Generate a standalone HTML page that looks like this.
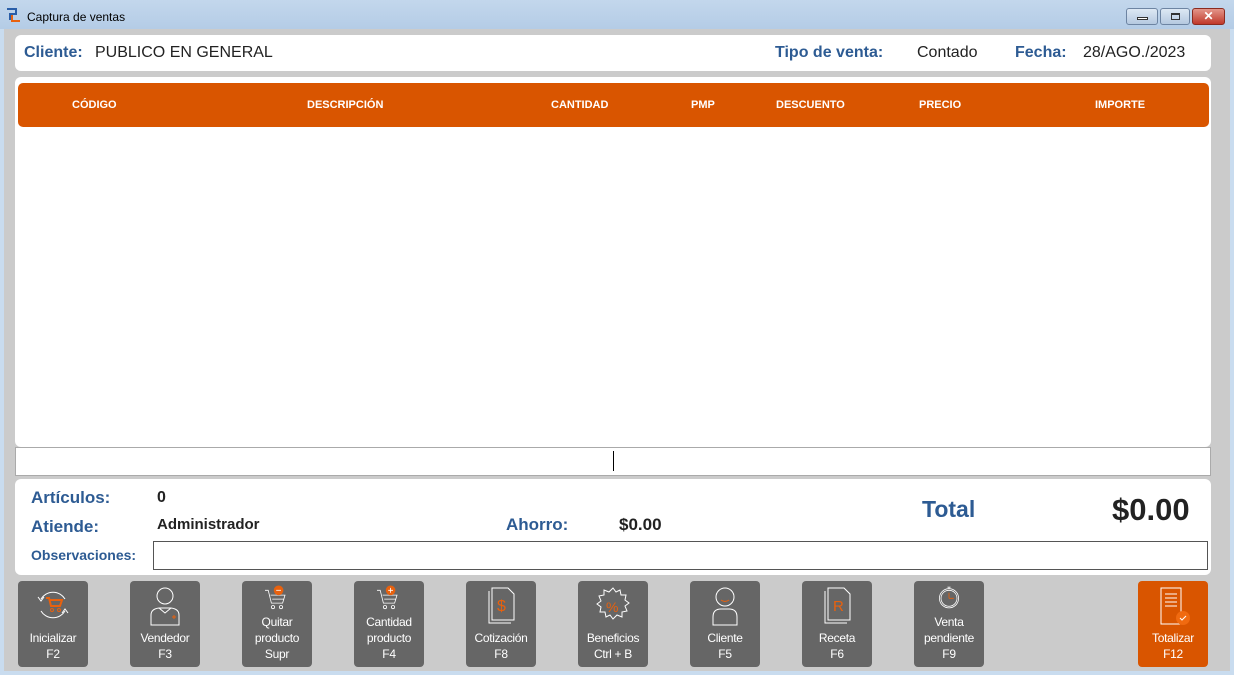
<!DOCTYPE html>
<html><head><meta charset="utf-8"><style>
*{margin:0;padding:0;box-sizing:border-box}
body{width:1234px;height:675px;overflow:hidden;font-family:"Liberation Sans",sans-serif;background:#c9dcef;position:relative}
.title{position:absolute;left:0;top:0;width:1234px;height:29px;background:linear-gradient(#c3d7ec,#b4cce6)}
.title span{position:absolute;left:27px;top:10px;font-size:12px;color:#000}
.frame{position:absolute;left:4px;top:29px;width:1226px;height:642px;background:#cbcbcb}
.p{position:absolute;background:#fff;border-radius:6px}
.lbl{position:absolute;color:#2d5b93;font-weight:bold}
.t{position:absolute;color:#222}
.hd{position:absolute;left:18px;top:83px;width:1191px;height:44px;background:#d95500;border-radius:5px}
.hd span{position:absolute;top:16px;font-size:11px;font-weight:bold;color:#fff}
.btn{position:absolute;top:581px;width:70px;height:86px;background:#666;border-radius:4px;color:#fff;font-size:12px;text-align:center;line-height:16px;letter-spacing:-0.3px}
.btn .tx{position:absolute;left:0;right:0;bottom:5px}
.btn svg{position:absolute;left:50%;top:4px;transform:translateX(-50%)}
.btn.s svg{top:2px}
.wb{position:absolute;top:8px;height:17px;border:1px solid #6d84a2;border-radius:3px;background:linear-gradient(#dde8f4,#b5c9e0)}
</style></head><body>
<div class="title">
<svg style="position:absolute;left:5px;top:7px" width="16" height="16"><path d="M2 2h9v5H5v6" stroke="#2a5ea8" stroke-width="2" fill="none"/><path d="M7 8v6h8" stroke="#e8610e" stroke-width="2" fill="none"/></svg>
<span>Captura de ventas</span>
<div class="wb" style="left:1126px;width:32px"><div style="position:absolute;left:10px;top:8px;width:11px;height:3px;border:1px solid #333;background:#fff"></div></div>
<div class="wb" style="left:1160px;width:30px"><div style="position:absolute;left:10px;top:4px;width:9px;height:7px;border:1px solid #333;border-top-width:2px"></div></div>
<div class="wb" style="left:1192px;width:33px;background:linear-gradient(#e3968a,#c0392b);border-color:#8b2b20;color:#fff;font-weight:bold;font-size:12px;text-align:center;line-height:15px">✕</div>
</div>
<div class="frame"></div>
<div class="p" style="left:15px;top:35px;width:1196px;height:36px"></div>
<div class="lbl" style="left:24px;top:44px;font-size:16px">Cliente:</div>
<div class="t" style="left:95px;top:44px;font-size:16px">PUBLICO EN GENERAL</div>
<div class="lbl" style="left:775px;top:44px;font-size:16px">Tipo de venta:</div>
<div class="t" style="left:917px;top:44px;font-size:16px">Contado</div>
<div class="lbl" style="left:1015px;top:44px;font-size:16px">Fecha:</div>
<div class="t" style="left:1083px;top:44px;font-size:16px">28/AGO./2023</div>
<div class="p" style="left:15px;top:77px;width:1196px;height:370px"></div>
<div class="hd">
<span style="left:54px">CÓDIGO</span><span style="left:289px">DESCRIPCIÓN</span><span style="left:533px">CANTIDAD</span><span style="left:673px">PMP</span><span style="left:758px">DESCUENTO</span><span style="left:901px">PRECIO</span><span style="left:1077px">IMPORTE</span>
</div>
<div style="position:absolute;left:15px;top:447px;width:1196px;height:29px;background:#fff;border:1px solid #aaa"></div>
<div style="position:absolute;left:613px;top:451px;width:1px;height:20px;background:#000"></div>
<div class="p" style="left:15px;top:479px;width:1196px;height:96px"></div>
<div class="lbl" style="left:31px;top:488px;font-size:17px">Artículos:</div>
<div class="t" style="left:157px;top:489px;font-size:16px;font-weight:bold">0</div>
<div class="lbl" style="left:31px;top:517px;font-size:17px">Atiende:</div>
<div class="t" style="left:157px;top:516px;font-size:15px;font-weight:bold">Administrador</div>
<div class="lbl" style="left:506px;top:515px;font-size:17px">Ahorro:</div>
<div class="t" style="left:619px;top:515px;font-size:17px;font-weight:bold">$0.00</div>
<div class="lbl" style="left:922px;top:496px;font-size:23px">Total</div>
<div class="t" style="left:1112px;top:492px;font-size:31px;font-weight:bold">$0.00</div>
<div class="lbl" style="left:31px;top:547px;font-size:14px">Observaciones:</div>
<div style="position:absolute;left:153px;top:541px;width:1055px;height:29px;border:1px solid #555;background:#fff"></div>

<div class="btn" style="left:18px"><svg width="40" height="40" fill="none" stroke="#fff"><path d="M8 14a14 14 0 0 1 24 0M32 26a14 14 0 0 1-24 0"/><path d="M5 12l3 4 3-4M29 28l3-4 3 4"/><path d="M13 13h3l2 8h9l2-6H17" stroke="#e8610e" stroke-width="2"/><circle cx="19" cy="25" r="1.5" stroke="#e8610e"/><circle cx="26" cy="25" r="1.5" stroke="#e8610e"/></svg><div class="tx">Inicializar<br>F2</div></div>
<div class="btn" style="left:130px"><svg width="40" height="44" viewBox="0 0 40 44" fill="none" stroke="#fff"><circle cx="20" cy="11" r="8"/><path d="M6 40V30q0-6 8-7h12q8 1 8 7v10zM14 23l6 5 6-5"/><path d="M27 32h4M29 30v4" stroke="#e8610e"/></svg><div class="tx">Vendedor<br>F3</div></div>
<div class="btn s" style="left:242px"><svg width="32" height="29" viewBox="0 0 40 36" fill="none" stroke="#fff"><path d="M5 9h4l4 16h14l3-10H12M14 20h15"/><circle cx="15" cy="30" r="2"/><circle cx="25" cy="30" r="2"/><circle cx="22" cy="9" r="6" fill="#e8610e" stroke="none"/><path d="M19 9h6" stroke="#fff"/></svg><div class="tx">Quitar<br>producto<br>Supr</div></div>
<div class="btn s" style="left:354px"><svg width="32" height="29" viewBox="0 0 40 36" fill="none" stroke="#fff"><path d="M5 9h4l4 16h14l3-10H12M14 20h15"/><circle cx="15" cy="30" r="2"/><circle cx="25" cy="30" r="2"/><circle cx="22" cy="9" r="6" fill="#e8610e" stroke="none"/><path d="M19 9h6M22 6v6" stroke="#fff"/></svg><div class="tx">Cantidad<br>producto<br>F4</div></div>
<div class="btn" style="left:466px"><svg width="40" height="44" fill="none" stroke="#fff"><path d="M8 6v32h22M11 3v32h22V9l-6-6z"/><text x="16" y="26" font-size="16" fill="#e8610e" stroke="none" font-family="Liberation Sans">$</text></svg><div class="tx">Cotización<br>F8</div></div>
<div class="btn" style="left:578px"><svg width="40" height="44" fill="none" stroke="#fff"><path d="M20 3l3 4 4-2 1 5 5 0-1 5 4 3-4 3 2 5-5 1 0 5-5-2-4 4-3-4-4 2-1-5-5 0 1-5-4-3 4-3-2-5 5-1 0-5 5 2z"/><text x="13" y="27" font-size="14" fill="#e8610e" stroke="none" font-family="Liberation Sans">%</text></svg><div class="tx">Beneficios<br>Ctrl + B</div></div>
<div class="btn" style="left:690px"><svg width="40" height="44" fill="none" stroke="#fff"><circle cx="20" cy="12" r="9"/><path d="M16 15q4 3 8 0" stroke="#e8610e"/><path d="M8 40V32q0-8 8-8h8q8 0 8 8v8z"/></svg><div class="tx">Cliente<br>F5</div></div>
<div class="btn" style="left:802px"><svg width="40" height="44" fill="none" stroke="#fff"><path d="M8 6v32h22M11 3v32h22V9l-6-6z"/><text x="16" y="26" font-size="15" fill="#e8610e" stroke="none" font-family="Liberation Sans">R</text></svg><div class="tx">Receta<br>F6</div></div>
<div class="btn s" style="left:914px"><svg width="32" height="29" viewBox="0 0 40 36" fill="none" stroke="#fff"><circle cx="20" cy="19" r="12"/><circle cx="20" cy="19" r="10"/><path d="M18 5h4M20 5v2"/><path d="M20 19v-7M20 19h6" stroke="#e8610e"/></svg><div class="tx">Venta<br>pendiente<br>F9</div></div>
<div class="btn" style="left:1138px;background:#d95500"><svg width="40" height="44" fill="none" stroke="#fff"><path d="M8 3h20v36H8z"/><path d="M12 9h12M12 13h12M12 17h12M12 21h12"/><circle cx="30" cy="33" r="7" fill="#f06a10" stroke="none"/><path d="M27 33l2 2 4-4"/></svg><div class="tx">Totalizar<br>F12</div></div>
</body></html>
